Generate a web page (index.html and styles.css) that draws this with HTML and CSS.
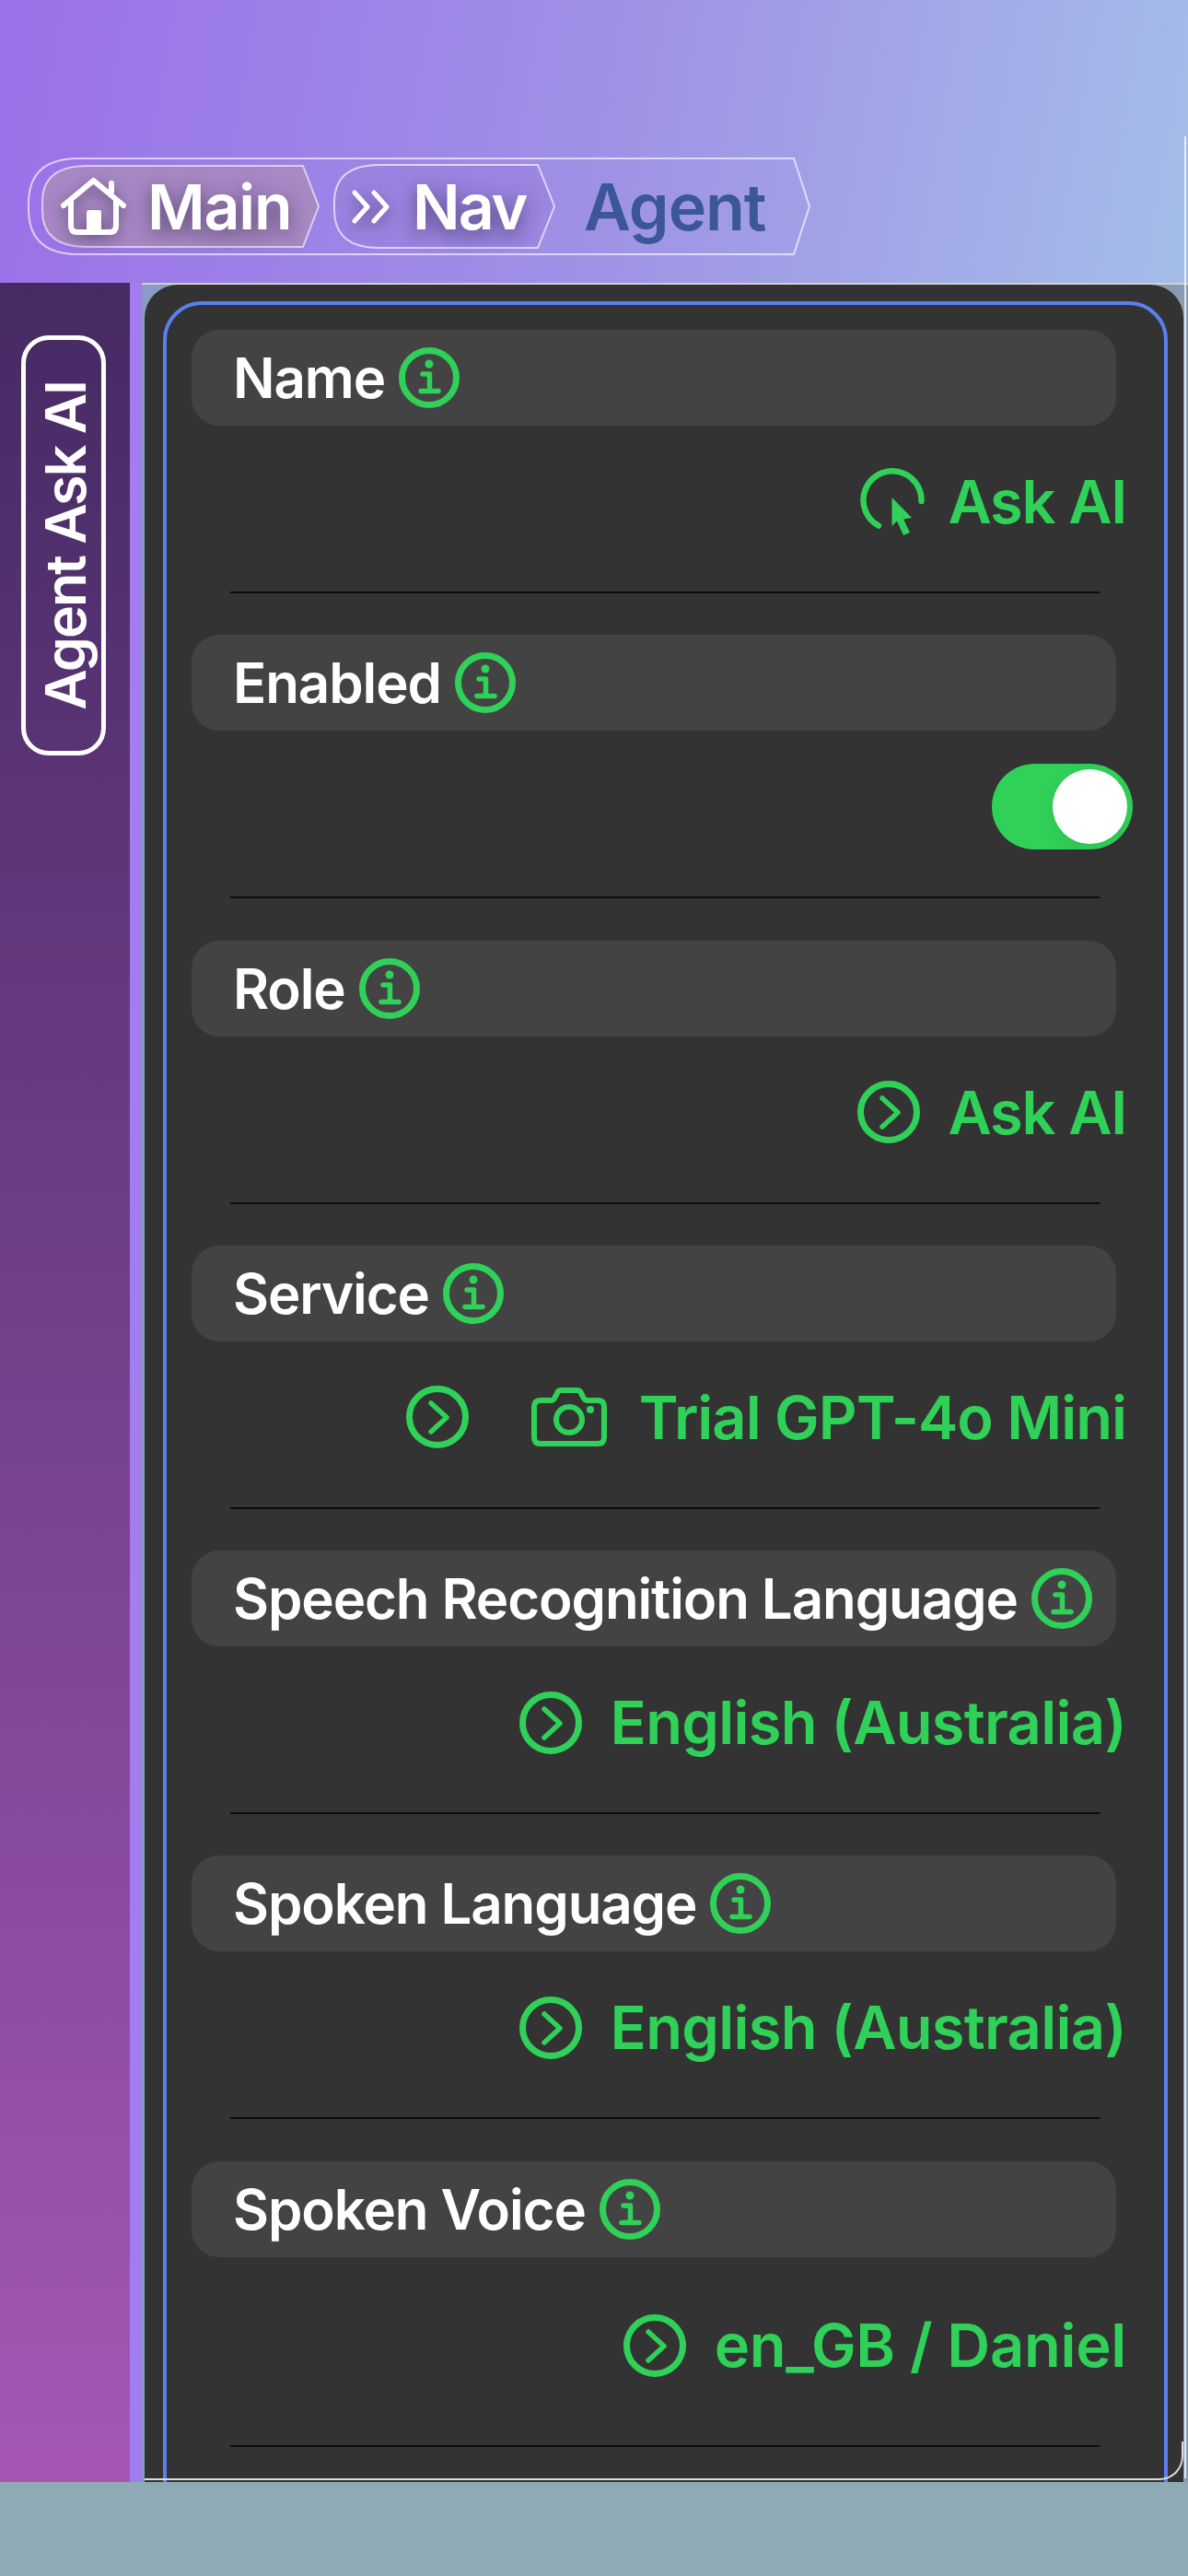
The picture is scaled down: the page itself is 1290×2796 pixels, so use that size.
FILE: index.html
```html
<!DOCTYPE html>
<html lang="en">
<head>
    <meta charset="UTF-8">
    <meta name="viewport" content="width=device-width, initial-scale=1.0">
    <title>Agent</title>
    <link rel="stylesheet" href="styles.css">
</head>
<body>
    <div class="app">
        <!-- Breadcrumb -->
        <header class="header">
            <nav class="crumbs">
                <svg class="crumb-shape" viewBox="0 0 850 106" preserveAspectRatio="none">
                    <path d="M55 1H832L849 53L832 105H55Q1 105 1 56V50Q1 1 55 1Z" fill="none" stroke="#fff" stroke-opacity=".65" stroke-width="2"/>
                </svg>
                <a class="crumb crumb-main">
                    <svg class="crumb-shape" viewBox="0 0 302 90" preserveAspectRatio="none">
                        <path d="M50 1H284L301 45L284 89H50Q1 89 1 50V40Q1 1 50 1Z" fill="#a98ac0" fill-opacity=".9" stroke="#fff" stroke-opacity=".6" stroke-width="2"/>
                    </svg>
                    <svg class="home-icon" width="71" height="62" viewBox="0 0 71 62">
                        <path d="M3 30L35.500 3L68 30M55 15V6M11 24V52Q11 59 18 59H53Q60 59 60 52V24" fill="none" stroke="#fff" stroke-width="6" stroke-linecap="round" stroke-linejoin="round"/>
                        <path d="M28 38Q28 35 31 35H41Q44 35 44 38V59H28Z" fill="#fff"/>
                    </svg>
                    <span class="crumb-text crumb-text-main">Main</span>
                </a>
                <a class="crumb crumb-nav">
                    <svg class="crumb-shape" viewBox="0 0 241 92" preserveAspectRatio="none">
                        <path d="M50 1H222L240 46L222 91H50Q1 91 1 50V42Q1 1 50 1Z" fill="#9a80dc" fill-opacity=".6" stroke="#fff" stroke-opacity=".65" stroke-width="2"/>
                    </svg>
                    <svg class="chevrons-icon" width="41" height="37" viewBox="0 0 41 37">
                        <path d="M3 3L17 18.500L3 34M24 3L38 18.500L24 34" fill="none" stroke="#fff" stroke-width="5" stroke-linecap="round" stroke-linejoin="round"/>
                    </svg>
                    <span class="crumb-text">Nav</span>
                </a>
                <span class="crumb-current">Agent</span>
            </nav>
        </header>

        <div class="layout">
            <aside class="sidebar">
                <div class="side-button"><span class="side-text">Agent Ask AI</span></div>
            </aside>
            <div class="strip"></div>

            <main class="content">
                <div class="panel">
                    <div class="frame">
                        <section class="field">
                            <div class="field-label">Name
                                <svg class="info-icon" viewBox="0 0 66 66"><use href="#info"/></svg>
                            </div>
                            <div class="field-value field-value-click">
                                <svg class="click-icon" width="70" height="74" viewBox="0 0 70 74">
                                    <path d="M66.500 36A31.500 31.500 0 1 0 20 62.500" fill="none" stroke="currentColor" stroke-width="6.500" stroke-linecap="round"/>
                                    <path d="M34.500 32L56 54L47 55.500L54 70L47 73L40 57.500L34.500 63Z" fill="currentColor"/>
                                </svg>
                                <span class="ask-text">Ask AI</span>
                            </div>
                            <hr class="divider">
                        </section>

                        <section class="field">
                            <div class="field-label">Enabled
                                <svg class="info-icon" viewBox="0 0 66 66"><use href="#info"/></svg>
                            </div>
                            <div class="field-value">
                                <div class="toggle"><div class="toggle-knob"></div></div>
                            </div>
                            <hr class="divider">
                        </section>

                        <section class="field">
                            <div class="field-label">Role
                                <svg class="info-icon" viewBox="0 0 66 66"><use href="#info"/></svg>
                            </div>
                            <div class="field-value">
                                <svg class="go-icon" viewBox="0 0 68 68"><use href="#go"/></svg>
                                <span class="ask-text">Ask AI</span>
                            </div>
                            <hr class="divider">
                        </section>

                        <section class="field">
                            <div class="field-label">Service
                                <svg class="info-icon" viewBox="0 0 66 66"><use href="#info"/></svg>
                            </div>
                            <div class="field-value field-value-service">
                                <svg class="go-icon" viewBox="0 0 68 68"><use href="#go"/></svg>
                                <svg class="camera-icon" width="82" height="64" viewBox="0 0 82 64">
                                    <path d="M10 14H22Q24 14 26 10L28 6Q29 3 33 3H49Q53 3 54 6L56 10Q58 14 60 14H72Q79 14 79 21V54Q79 61 72 61H10Q3 61 3 54V21Q3 14 10 14Z" fill="none" stroke="currentColor" stroke-width="6"/>
                                    <circle cx="41" cy="35" r="14" fill="none" stroke="currentColor" stroke-width="6"/>
                                    <circle cx="64" cy="24" r="4" fill="currentColor"/>
                                </svg>
                                <span>Trial GPT-4o Mini</span>
                            </div>
                            <hr class="divider">
                        </section>

                        <section class="field">
                            <div class="field-label">Speech Recognition Language
                                <svg class="info-icon" viewBox="0 0 66 66"><use href="#info"/></svg>
                            </div>
                            <div class="field-value">
                                <svg class="go-icon" viewBox="0 0 68 68"><use href="#go"/></svg>
                                <span>English (Australia)</span>
                            </div>
                            <hr class="divider">
                        </section>

                        <section class="field">
                            <div class="field-label">Spoken Language
                                <svg class="info-icon" viewBox="0 0 66 66"><use href="#info"/></svg>
                            </div>
                            <div class="field-value">
                                <svg class="go-icon" viewBox="0 0 68 68"><use href="#go"/></svg>
                                <span>English (Australia)</span>
                            </div>
                            <hr class="divider">
                        </section>

                        <section class="field">
                            <div class="field-label">Spoken Voice
                                <svg class="info-icon" viewBox="0 0 66 66"><use href="#info"/></svg>
                            </div>
                            <div class="field-value field-value-tall">
                                <svg class="go-icon" viewBox="0 0 68 68"><use href="#go"/></svg>
                                <span>en_GB / Daniel</span>
                            </div>
                            <hr class="divider">
                        </section>
                    </div>
                </div>
            </main>
        </div>
    </div>

    <!-- Shared icons -->
    <svg class="icon-defs" width="0" height="0">
        <symbol id="info" viewBox="0 0 66 66">
            <circle cx="33" cy="33" r="29.500" fill="none" stroke="#30d158" stroke-width="7"/>
            <circle cx="33" cy="18" r="4.500" fill="#30d158"/>
            <path d="M26 29H33.500V47.500M24 47.500H43" fill="none" stroke="#30d158" stroke-width="5.500" stroke-linecap="round" stroke-linejoin="round"/>
        </symbol>
        <symbol id="go" viewBox="0 0 68 68">
            <circle cx="34" cy="34" r="30.500" fill="none" stroke="#30d158" stroke-width="7"/>
            <path d="M27 19L44 34.500L27 50" fill="none" stroke="#30d158" stroke-width="5.500" stroke-linecap="round" stroke-linejoin="round"/>
        </symbol>
    </svg>
</body>
</html>
```

FILE: styles.css
```css
* {
    margin: 0;
    padding: 0;
    box-sizing: border-box;
}

body {
    width: 1290px;
    height: 2796px;
    overflow: hidden;
    font-family: Inter, "Liberation Sans", sans-serif;
    background: #8eaab5;
}

.app {
    position: relative;
    height: 2694px;
    display: flex;
    flex-direction: column;
}

/* right edge hairline */
.app::after {
    content: "";
    position: absolute;
    top: 148px;
    bottom: 4px;
    right: 2px;
    width: 2px;
    background: rgba(255, 255, 255, 0.75);
}

.header {
    height: 307px;
    flex-shrink: 0;
    padding: 171px 0 0 30px;
    background: linear-gradient(100deg, #9a70e8 0%, #9f90e6 50%, #a4bde8 100%);
}

.crumbs {
    position: relative;
    width: 850px;
    height: 106px;
    display: flex;
    align-items: center;
}

.crumb-shape {
    position: absolute;
    top: 0;
    left: 0;
    width: 100%;
    height: 100%;
}

.crumb {
    position: relative;
    display: flex;
    align-items: center;
    color: #fff;
}

.crumb-main {
    width: 302px;
    height: 90px;
    margin-left: 15px;
    padding-left: 21px;
    gap: 23px;
}

.crumb-nav {
    width: 241px;
    height: 92px;
    margin-left: 15px;
    padding-left: 20px;
    gap: 25px;
}

.home-icon, .chevrons-icon {
    position: relative;
    flex-shrink: 0;
    filter: drop-shadow(0 5px 8px rgba(40, 30, 60, 0.55));
}

.crumb-text {
    position: relative;
    font-size: 68px;
    font-weight: 600;
    letter-spacing: -2px;
    text-shadow: 0 6px 20px rgba(40, 30, 60, 0.6);
}

.crumb-text-main {
    letter-spacing: -1.200px;
}

.crumb-current {
    position: relative;
    margin-left: 31px;
    font-size: 70px;
    font-weight: 600;
    letter-spacing: -1px;
    color: #3b5798;
}

.layout {
    flex: 1;
    min-height: 0;
    display: flex;
}

.sidebar {
    width: 141px;
    flex-shrink: 0;
    padding: 57px 0 0 23px;
    background: linear-gradient(180deg, #452a63 0%, #a458b4 100%);
}

.side-button {
    width: 92px;
    height: 456px;
    display: flex;
    align-items: center;
    justify-content: center;
    border: 5px solid #fff;
    border-radius: 30px;
}

.side-text {
    margin-left: 4px;
    writing-mode: vertical-rl;
    transform: rotate(180deg);
    font-size: 61px;
    font-weight: 600;
    letter-spacing: -2px;
    color: #fff;
    white-space: nowrap;
}

.strip {
    width: 13px;
    flex-shrink: 0;
    background: #a37cf0;
}

.content {
    flex: 1;
    min-width: 0;
    padding: 0 5px 0 3px;
    border-top: 2px solid #d2d2ca;
    background: linear-gradient(90deg, #8a9cc6 0%, #8a9bb0 100%);
}

.panel {
    position: relative;
    height: 100%;
    overflow: hidden;
    background: #333;
    border-radius: 36px 36px 0 0;
}

/* bottom edge line */
.panel::after {
    content: "";
    position: absolute;
    left: 0;
    right: 0;
    bottom: 2px;
    height: 40px;
    border-bottom: 2px solid #ddd;
    border-right: 2px solid #ddd;
    border-bottom-right-radius: 26px;
}

.frame {
    margin: 18px 17px 0 20px;
    padding: 27px 34px 60px 27px;
    border: 4px solid #5a80f0;
    border-radius: 42px;
}

.field-label {
    height: 104px;
    margin-right: 18px;
    padding-left: 45px;
    display: flex;
    align-items: center;
    gap: 15px;
    font-size: 60px;
    font-weight: 600;
    letter-spacing: -1.100px;
    color: #fff;
    background: #434343;
    border-radius: 30px;
}

.info-icon {
    width: 66px;
    height: 66px;
}

.field-value {
    height: 165px;
    margin-bottom: 15px;
    padding-right: 7px;
    display: flex;
    align-items: center;
    justify-content: flex-end;
    gap: 31px;
    font-size: 65px;
    font-weight: 600;
    letter-spacing: -0.700px;
    color: #30d158;
}

.ask-text {
    letter-spacing: -1.300px;
}

.field-value-click {
    gap: 26px;
}

.field-value-service {
    gap: 35px;
    letter-spacing: -1px;
}

.field-value-service .go-icon {
    margin-right: 33px;
}

.field-value-tall {
    height: 192px;
    margin-bottom: 12.600px;
    letter-spacing: -0.300px;
}

.go-icon {
    width: 68px;
    height: 68px;
}

.toggle {
    position: relative;
    width: 153px;
    height: 93px;
    margin-right: -7px;
    background: #30d158;
    border-radius: 47px;
}

.toggle-knob {
    position: absolute;
    top: 6px;
    right: 6px;
    width: 81px;
    height: 81px;
    background: #fff;
    border-radius: 50%;
    box-shadow: 0 6px 20px rgba(0, 0, 0, 0.08);
}

.divider {
    height: 2px;
    margin: 0 36px 45.300px 42px;
    border: none;
    background: #0c0c0c;
}

.icon-defs {
    position: absolute;
}
```
